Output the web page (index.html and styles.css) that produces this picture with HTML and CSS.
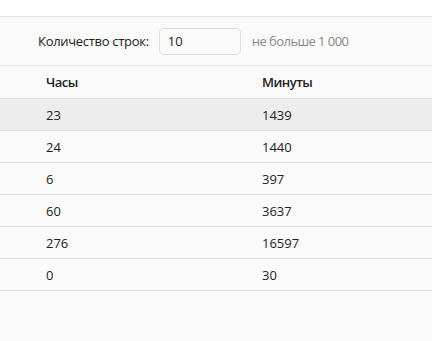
FILE: index.html
```html
<!DOCTYPE html>
<html lang="ru">
<head>
<meta charset="utf-8">
<link rel="stylesheet" href="styles.css">
</head>
<body>
<div class="topband"></div>
<div class="toolbar">
  <span class="label">Количество строк:</span>
  <div class="input">10</div>
  <span class="hint">не больше 1 000</span>
</div>
<div class="table">
  <div class="row head"><div class="c1">Часы</div><div class="c2">Минуты</div></div>
  <div class="row hl"><div class="c1">23</div><div class="c2">1439</div></div>
  <div class="row"><div class="c1">24</div><div class="c2">1440</div></div>
  <div class="row"><div class="c1">6</div><div class="c2">397</div></div>
  <div class="row"><div class="c1">60</div><div class="c2">3637</div></div>
  <div class="row"><div class="c1">276</div><div class="c2">16597</div></div>
  <div class="row"><div class="c1">0</div><div class="c2">30</div></div>
</div>
</body>
</html>
```
FILE: styles.css
```css
html, body {
  margin: 0;
  padding: 0;
  background: #fafafa;
  font-family: "Open Sans", "Noto Sans", sans-serif;
  font-size: 13px;
  color: #222;
}
.topband {
  height: 16px;
  background: #fff;
  border-bottom: 1px solid #e5e5e5;
}
.toolbar {
  height: 48px;
  display: flex;
  align-items: center;
  padding-left: 38px;
  border-bottom: 1px solid #e5e5e5;
}
.label {
  margin-right: 10px;
  letter-spacing: -0.3px;
}
.input {
  box-sizing: border-box;
  width: 82px;
  height: 27px;
  border: 1px solid #dedede;
  border-radius: 5px;
  background: #fafafa;
  padding-left: 8px;
  display: flex;
  align-items: center;
  margin-right: 11px;
}
.hint {
  color: #888;
  letter-spacing: -0.55px;
}
.row {
  display: grid;
  grid-template-columns: 262px 1fr;
  height: 31px;
  align-items: center;
  border-bottom: 1px solid #e0e0e0;
}
.row.head {
  font-weight: 600;
  height: 32px;
  letter-spacing: -0.5px;
}
.row.hl {
  background: #ededed;
}
.c1 {
  padding-left: 46px;
}
```
